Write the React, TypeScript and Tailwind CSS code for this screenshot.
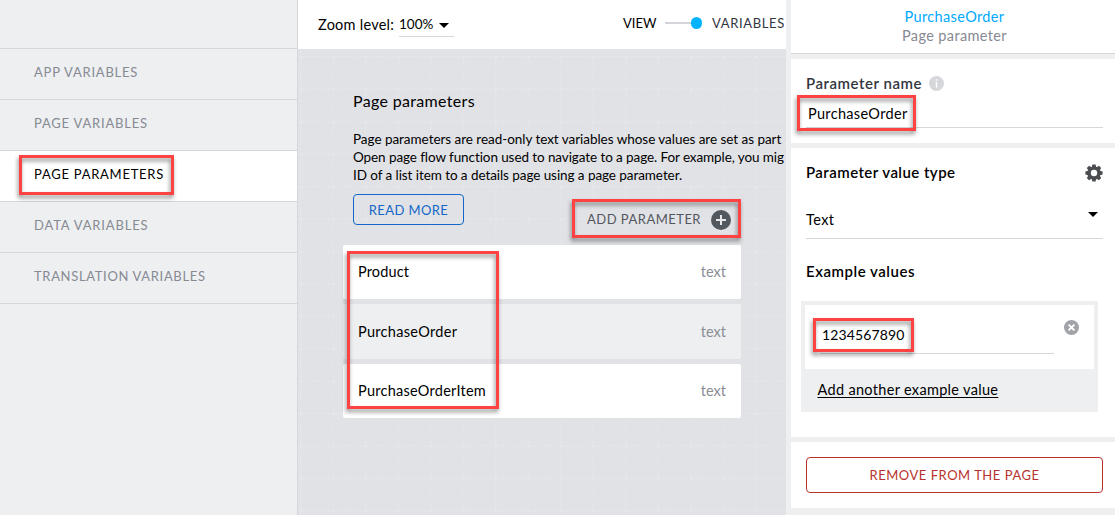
import type { ReactNode } from "react";

const navItems = [
  { label: "APP VARIABLES", tracking: "tracking-[0.78px]" },
  { label: "PAGE VARIABLES", tracking: "tracking-[0.8px]" },
  { label: "PAGE PARAMETERS", tracking: "tracking-[0.74px]", active: true },
  { label: "DATA VARIABLES", tracking: "tracking-[0.84px]" },
  { label: "TRANSLATION VARIABLES", tracking: "tracking-[0.66px]" },
];

const parameters = [
  { name: "Product", box: "h-[54px] bg-white pb-px", tracking: "tracking-[0.13px]" },
  { name: "PurchaseOrder", box: "h-[55px] bg-[#edeff1]", tracking: "tracking-[0.3px]" },
  { name: "PurchaseOrderItem", box: "h-[54px] bg-white pb-px", tracking: "tracking-[0.25px]" },
];

function Highlight({ className }: { className: string }) {
  return (
    <div
      className={`pointer-events-none absolute border-3 border-[#ff4343] drop-shadow-[-1px_3px_2px_rgba(0,0,0,0.45)] ${className}`}
    />
  );
}

function CanvasGrid() {
  return (
    <svg className="absolute inset-0 h-full w-full" aria-hidden="true">
      <defs>
        <pattern id="grid" x="2" y="7" width="32.5" height="32.45" patternUnits="userSpaceOnUse">
          <path d="M0 0.5H32.5" stroke="#e6e7ea" strokeWidth="1" strokeDasharray="3.5 1.9" />
          <path d="M0.5 0V32.5" stroke="#e5e6e9" strokeWidth="1" strokeDasharray="3.5 1.9" />
          <path d="M0 0h2v2H0z" fill="#e8e9eb" />
        </pattern>
      </defs>
      <rect width="100%" height="100%" fill="url(#grid)" />
    </svg>
  );
}

function Caret() {
  return (
    <svg width="10" height="5" viewBox="0 0 10 5" aria-hidden="true">
      <path d="M0 0H10L5 5Z" fill="#000" />
    </svg>
  );
}

function GearIcon() {
  return (
    <svg width="18" height="18" viewBox="-9 -9 18 18" aria-hidden="true">
      {[0, 45, 90, 135].map((angle) => (
        <path key={angle} d="M-2.2 -6L-1.6 -8.6H1.6L2.2 -6V6L1.6 8.6H-1.6L-2.2 6Z" fill="#4b4d51" transform={`rotate(${angle})`} />
      ))}
      <circle r="6.6" fill="#4b4d51" />
      <circle r="3.2" fill="#fff" />
    </svg>
  );
}

function Section({ className, children }: { className: string; children: ReactNode }) {
  return <section className={`bg-white pl-[15px] pr-3 ${className}`}>{children}</section>;
}

function Sidebar() {
  return (
    <nav className="h-full w-[298px] shrink-0 border-r border-[#d5d7db] bg-[#edeff1]">
      <div className="h-[49px] border-b border-[#d5d7db]" />
      {navItems.map((item) => (
        <div
          key={item.label}
          className={`flex h-[51px] items-center border-b border-[#d5d7db] pb-[2px] pl-[34px] text-[13px] ${item.tracking} ${
            item.active ? "bg-white text-black" : "text-[#878a92]"
          }`}
        >
          {item.label}
        </div>
      ))}
    </nav>
  );
}

function Workspace() {
  return (
    <main className="flex h-full w-[488px] shrink-0 flex-col overflow-hidden">
      <header className="flex h-[49px] shrink-0 bg-white">
        <div className="w-[76px] ml-5 pt-4 text-[14.5px] leading-[18px] tracking-[0.25px] whitespace-nowrap text-black">Zoom level:</div>
        <div className="ml-[5px] mt-[15px] flex h-[22px] w-[55px] justify-between border-b border-[#d5d7db] pr-[5px] text-[13.5px] leading-[18px]">
          100%
          <span className="pt-2">
            <Caret />
          </span>
        </div>
        <div className="ml-[169px] mt-[13px] flex h-[20px] items-center text-[13px] leading-[20px] whitespace-nowrap">
          <span className="w-[42px] text-black">VIEW</span>
          <span className="h-[2px] w-[26px] bg-[#d3d5da]" />
          <span className="h-3 w-[11px] rounded-full bg-[#00b3ff]" />
          <span className="ml-[10px] tracking-[0.65px] text-[#32363f]">VARIABLES</span>
        </div>
      </header>
      <div className="relative min-h-0 flex-1 overflow-hidden bg-[#e1e2e6]">
        <CanvasGrid />
        <div className="relative pl-[45px] pt-[42px]">
          <div className="pl-[10px]">
            <h1 className="text-[16px] leading-5 tracking-[0.33px] text-black">Page parameters</h1>
            <div className="mt-[19px] text-[13.5px] leading-[18px] whitespace-nowrap text-black">
              <p className="tracking-[-0.04px]">Page parameters are read-only text variables whose values are set as part</p>
              <p className="tracking-[-0.09px]">Open page flow function used to navigate to a page. For example, you mig</p>
              <p className="tracking-[-0.07px]">ID of a list item to a details page using a page parameter.</p>
            </div>
            <button className="mt-[10px] flex h-[31px] w-[111px] items-center justify-center rounded-[4px] border border-[#1467c8] text-[13px] leading-[18px] tracking-[0.4px] text-[#1467c8]">
              READ MORE
            </button>
          </div>
          <div className="-mt-[15px] flex h-5 w-[398px] items-center justify-end pr-[10px] text-[13px] tracking-[0.48px] text-[#53575e]">
            <span>ADD PARAMETER</span>
            <svg className="ml-[10px]" width="20" height="20" viewBox="0 0 20 20" aria-hidden="true">
              <circle cx="10" cy="10" r="10" fill="#53575e" />
              <path d="M5 10H15M10 5V15" stroke="#e6e7ea" strokeWidth="2" />
            </svg>
          </div>
          <div className="mt-[15px] flex w-[398px] flex-col gap-[5px]">
            {parameters.map((p) => (
              <div key={p.name} className={`flex items-center justify-between rounded-[2px] px-[15px] text-[14.5px] ${p.box}`}>
                <span className={`text-black ${p.tracking}`}>{p.name}</span>
                <span className="text-[#8b8e95]">text</span>
              </div>
            ))}
          </div>
        </div>
      </div>
    </main>
  );
}

function Inspector() {
  return (
    <aside className="flex h-full min-w-0 flex-1 flex-col gap-[5px] bg-[#edeff1] pl-[5px]">
      <header className="h-[54px] shrink-0 border-b border-[#d5d7db] bg-white pt-[7px] pl-[3px] text-center text-[14.5px] leading-[19px]">
        <div className="tracking-[0.35px] text-[#00a9ff]">PurchaseOrder</div>
        <div className="tracking-[0.37px] text-[#878a92]">Page parameter</div>
      </header>
      <Section className="h-[84px] shrink-0 pt-4">
        <div className="-mt-px flex items-center pb-px text-[15px] leading-[18px] font-semibold tracking-[0.54px] text-[#32363f]">
          Parameter name
          <svg className="ml-[7px] mt-px" width="15" height="15" viewBox="0 0 15 15" aria-hidden="true">
            <circle cx="7.5" cy="7.5" r="7.5" fill="#d5d7db" />
            <path d="M7.5 3.2V4.8M7.5 6V11.5" stroke="#fff" strokeWidth="1.4" />
          </svg>
        </div>
        <div className="mt-3 h-[23px] border-b border-[#d5d7db] pl-[2px] text-[14.5px] leading-[18px] tracking-[0.32px] text-black">
          PurchaseOrder
        </div>
      </Section>
      <Section className="h-[289px] shrink-0 pt-4">
        <div className="flex h-[18px] items-center justify-between text-[15px] leading-[18px] font-semibold tracking-[0.45px] text-black">
          <span className="pb-[2px]">Parameter value type</span>
          <GearIcon />
        </div>
        <div className="mt-[29px] flex h-[28px] justify-between border-b border-[#d5d7db] pr-[5px] text-[14.5px] leading-[18px] text-black">
          <span className="tracking-[0.4px]">Text</span>
          <span className="pt-px">
            <Caret />
          </span>
        </div>
        <div className="mt-[23px] text-[15px] leading-[18px] font-semibold tracking-[0.54px] text-black">Example values</div>
        <div className="mt-[21px] -ml-[5px] h-[111px] w-[297px] bg-[#edeff1] p-1">
          <div className="flex h-[64px] bg-white pl-[15px] pt-[15px]">
            <div className="mt-[6px] h-[28px] w-[234px] border-b border-[#d5d7db] pl-[2px] text-[14px] leading-[18px] tracking-[0.14px] text-black">
              1234567890
            </div>
            <svg className="ml-[10px]" width="15" height="15" viewBox="0 0 15 15" aria-hidden="true">
              <circle cx="7.5" cy="7.5" r="7.5" fill="#a1a3a9" />
              <path d="M4.6 4.6L10.4 10.4M10.4 4.6L4.6 10.4" stroke="#fff" strokeWidth="2" />
            </svg>
          </div>
          <div className="pl-[12.5px] pt-[12px] text-[14.5px] leading-[18px] tracking-[0.32px] text-black underline underline-offset-2">
            Add another example value
          </div>
        </div>
      </Section>
      <Section className="h-[66px] shrink-0 pt-[15px]">
        <button className="flex h-[36px] w-full items-center justify-center rounded-[4px] border border-[#b7322c] text-[13px] leading-[18px] tracking-[0.53px] text-[#b7322c]">
          REMOVE FROM THE PAGE
        </button>
      </Section>
    </aside>
  );
}

export default function App() {
  return (
    <div className="relative flex h-[515px] w-[1115px] overflow-hidden bg-[#edeff1] font-['Lato',sans-serif]">
      <Sidebar />
      <Workspace />
      <Inspector />
      <Highlight className="left-[19px] top-[155px] h-[40px] w-[155px]" />
      <Highlight className="left-[347px] top-[251px] h-[158px] w-[152px]" />
      <Highlight className="left-[572px] top-[199px] h-[39px] w-[169px]" />
      <Highlight className="left-[797px] top-[95px] h-[36px] w-[119px]" />
      <Highlight className="left-[813px] top-[318px] h-[34px] w-[101px]" />
    </div>
  );
}
